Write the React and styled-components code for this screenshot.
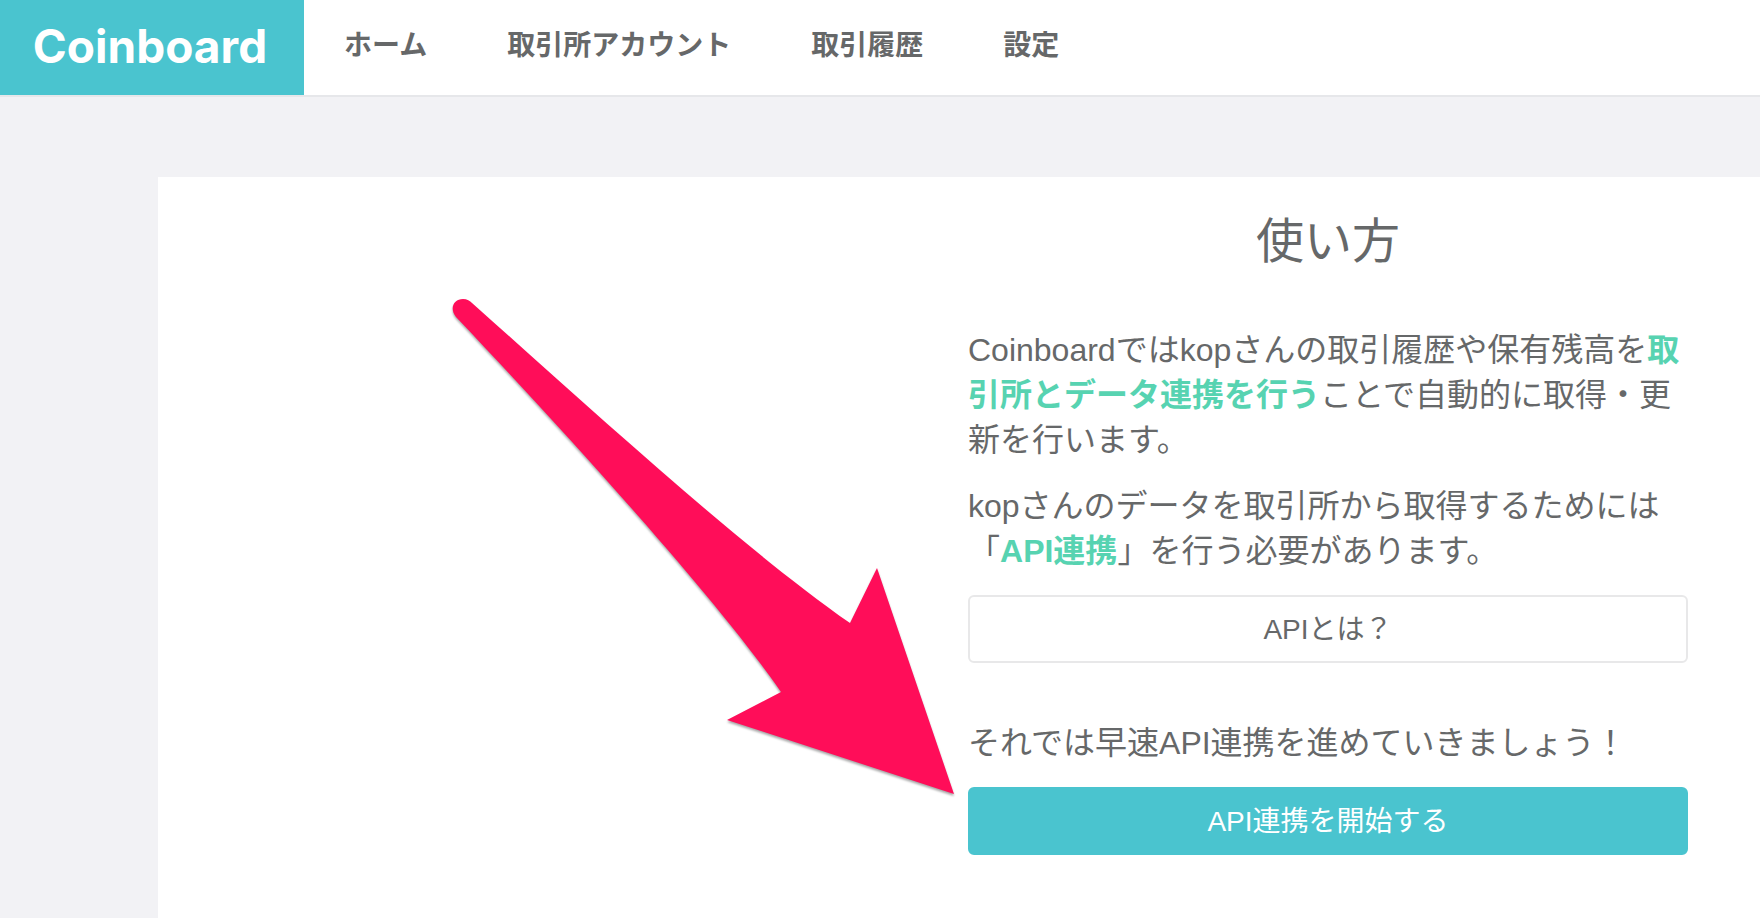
import React from "react";
import styled, { createGlobalStyle } from "styled-components";

const GlobalStyle = createGlobalStyle`
  * {
    box-sizing: border-box;
  }

  body {
    margin: 0;
    background: #f2f2f5;
    color: #666869;
    font-family: "Liberation Sans", "Noto Sans CJK JP", sans-serif;
    text-spacing-trim: space-all;
  }
`;

const Page = styled.div`
  display: flex;
  flex-direction: column;
  min-height: 100vh;
`;

const Header = styled.header`
  display: flex;
  background: #fff;
  border-bottom: 2px solid #e6e7ea;
`;

const Logo = styled.a`
  display: flex;
  align-items: center;
  justify-content: center;
  width: 304px;
  height: 95px;
  padding: 0 4px 3px 0;
  background: #4ac4cf;
  color: #fff;
  font-family: Inter, sans-serif;
  font-size: 46px;
  font-weight: 700;
  text-decoration: none;
`;

const Nav = styled.nav`
  display: flex;
  align-items: center;
  padding-bottom: 10px;
`;

const NavLink = styled.a`
  padding: 0 40px;
  color: inherit;
  font-size: 28px;
  font-weight: bold;
  text-decoration: none;
`;

const Card = styled.main`
  display: flex;
  flex: 1;
  justify-content: flex-end;
  margin: 80px 0 0 158px;
  padding: 0 72px;
  background: #fff;
`;

const Guide = styled.section`
  position: relative;
  flex: 0 1 720px;
  padding-top: 29px;
`;

const Title = styled.h1`
  margin: 0 0 50px;
  font-size: 48px;
  font-weight: normal;
  line-height: 72px;
  text-align: center;
`;

const Text = styled.p`
  margin: 0 0 21px;
  font-size: 32px;
  line-height: 45px;
`;

const Mark = styled.strong`
  color: #57d3b1;
`;

const Button = styled.button`
  display: block;
  width: 100%;
  height: 68px;
  margin-bottom: 58px;
  padding: 0 0 4px;
  border: 2px solid ${props => (props.$primary ? "#4ac4cf" : "#e8e8e9")};
  border-radius: 6px;
  background: ${props => (props.$primary ? "#4ac4cf" : "#fff")};
  color: ${props => (props.$primary ? "#fff" : "inherit")};
  font-family: inherit;
  font-size: 28px;
  cursor: pointer;
`;

const Pointer = styled.svg`
  position: absolute;
  top: 112px;
  right: 100%;
  width: 528px;
  height: 516px;
  pointer-events: none;
  filter: drop-shadow(0 2px 1px rgba(0, 0, 0, 0.35));
`;

const navItems = [
  { id: "home", label: "ホーム" },
  { id: "accounts", label: "取引所アカウント" },
  { id: "history", label: "取引履歴" },
  { id: "settings", label: "設定" },
];

const Arrow = () => (
  <Pointer viewBox="440 289 528 516" aria-hidden="true">
    <path
      fill="#ff0d59"
      d="M472 303 C600 417 740 546 850 623 L877 568 L954 794 L727 720 L781 692 C720 603 570 437 456 317 C449 308 454 299 463 299 C467 299 470 301 472 303 Z"
    />
  </Pointer>
);

const App = () => (
  <Page>
    <GlobalStyle />
    <Header>
      <Logo href="#home">Coinboard</Logo>
      <Nav>
        {navItems.map(({ id, label }) => (
          <NavLink key={id} href={`#${id}`}>
            {label}
          </NavLink>
        ))}
      </Nav>
    </Header>
    <Card>
      <Guide>
        <Title>使い方</Title>
        <Text>
          Coinboardではkopさんの取引履歴や保有残高を
          <Mark>取引所とデータ連携を行う</Mark>
          ことで自動的に取得・更新を行います。
        </Text>
        <Text>
          kopさんのデータを取引所から取得するためには「<Mark>API連携</Mark>
          」を行う必要があります。
        </Text>
        <Button type="button">APIとは？</Button>
        <Text>それでは早速API連携を進めていきましょう！</Text>
        <Button type="button" $primary>
          API連携を開始する
        </Button>
        <Arrow />
      </Guide>
    </Card>
  </Page>
);

export default App;
